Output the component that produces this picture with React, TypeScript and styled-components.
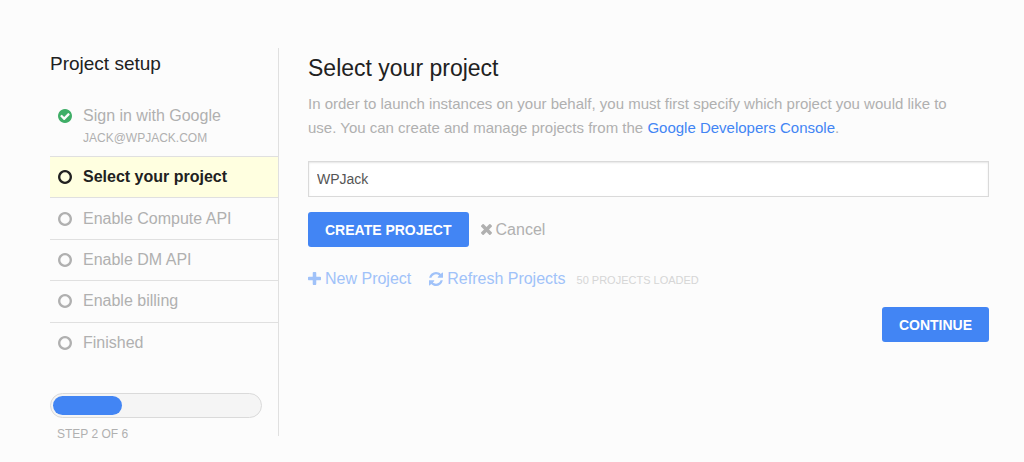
import React from "react";
import styled, { createGlobalStyle } from "styled-components";

const GlobalStyle = createGlobalStyle`
  * { box-sizing: border-box; }
  body {
    margin: 0;
    background: #fcfcfc;
    color: #b0b0b0;
    font-family: "Liberation Sans", Arial, sans-serif;
    font-size: 16px;
    line-height: 24px;
  }
`;

const Page = styled.div`
  display: flex;
  align-items: flex-start;
  padding: 48px 35px 24px 50px;
`;

const Sidebar = styled.aside`
  flex: 0 0 228px;
`;

const SidebarTitle = styled.h2`
  margin: 0 0 16px;
  color: #212121;
  font-size: 19px;
  font-weight: 400;
  line-height: 32px;
`;

const Steps = styled.ol`
  display: grid;
  grid-template-rows: 61px repeat(5, 1fr);
  min-height: 268px;
  margin: 0;
  padding: 0;
  list-style: none;
`;

const Step = styled.li<{ $active?: boolean }>`
  display: flex;
  align-items: center;
  gap: 11px;
  padding-left: 8px;
  border-bottom: 1px solid #e0e0e0;
  background: ${(p) => (p.$active ? "#ffffe0" : "transparent")};
  color: ${(p) => (p.$active ? "#212121" : "inherit")};
  font-weight: ${(p) => (p.$active ? 700 : 400)};

  &:last-child { border-bottom: 0; }
`;

const DoneStep = styled(Step)`
  align-items: flex-start;
  padding-top: 8px;
`;

const StepIcon = styled.span<{ $done?: boolean }>`
  display: flex;
  align-items: center;
  height: 24px;
  color: ${(p) => (p.$done ? "#3fae67" : "inherit")};
`;

const Account = styled.div`
  font-size: 12px;
  line-height: 20px;
  text-transform: uppercase;
`;

const Track = styled.div`
  height: 25px;
  margin: 29px 16px 6px 0;
  padding: 2px;
  border: 1px solid #dadada;
  border-radius: 13px;
  background: #f5f5f5;
`;

const Fill = styled.div`
  height: 100%;
  border-radius: 10px;
  background: #4285f4;
`;

const StepCount = styled.div`
  padding-left: 7px;
  font-size: 12px;
  line-height: 20px;
  text-transform: uppercase;
`;

const Main = styled.main`
  flex: 1;
  min-width: 0;
  min-height: 388px;
  padding-left: 29px;
  border-left: 1px solid #e0e0e0;
`;

const Title = styled.h1`
  margin: 0 0 4px;
  color: #212121;
  font-size: 23px;
  font-weight: 400;
  line-height: 40px;
`;

const Intro = styled.p`
  margin: 0 0 21px;
  padding-right: 20px;
  font-size: 15px;
`;

const ConsoleLink = styled.a`
  color: #4285f4;
  text-decoration: none;
`;

const NameInput = styled.input`
  display: block;
  width: 100%;
  height: 36px;
  padding: 0 8px;
  border: 1px solid #dadada;
  border-radius: 0;
  background: #fff;
  box-shadow: inset 0 1px 2px rgba(0, 0, 0, 0.1);
  color: #555;
  font: 14px "Liberation Sans", Arial, sans-serif;
  outline: 0;
`;

const Actions = styled.div`
  display: flex;
  align-items: center;
  gap: 12px;
  margin-top: 15px;
`;

const Links = styled(Actions)`
  gap: 18px;
  margin-top: 18px;
`;

const Footer = styled.div`
  display: flex;
  justify-content: flex-end;
  margin-top: 15px;
`;

const PrimaryButton = styled.button`
  height: 35px;
  padding: 0 17px;
  border: 0;
  border-radius: 3px;
  background: #4285f4;
  color: #fff;
  font: 700 14px "Liberation Sans", Arial, sans-serif;
  text-transform: uppercase;
  cursor: pointer;
`;

const TextButton = styled.button<{ $link?: boolean }>`
  display: flex;
  align-items: center;
  gap: 4px;
  padding: 0;
  border: 0;
  background: none;
  color: ${(p) => (p.$link ? "#a0c2f9" : "inherit")};
  font: inherit;
  cursor: pointer;
`;

const Loaded = styled.span`
  margin-left: -7px;
  padding-top: 3px;
  color: #d6d6d6;
  font-size: 11px;
  text-transform: uppercase;
`;

type IconProps = { box: string; size: number; d: string };

const Icon = ({ box, size, d }: IconProps) => (
  <svg width={size} height={size} viewBox={box} fill="currentColor" aria-hidden="true">
    <path d={d} />
  </svg>
);

const ring =
  "M896 386a510 510 0 1 0 0 1020a510 510 0 1 0 0-1020zm768 510q0 209-103 385.5t-279.5 279.5-385.5 103-385.5-103-279.5-279.5-103-385.5 103-385.5 279.5-279.5 385.5-103 385.5 103 279.5 279.5 103 385.5z";
const check =
  "M1412 734q0-28-18-46l-91-90q-19-19-45-19t-45 19l-408 407-226-226q-19-19-45-19t-45 19l-91 90q-18 18-18 46 0 27 18 45l362 362q19 19 45 19 27 0 46-19l543-543q18-18 18-45zm252 162q0 209-103 385.5t-279.5 279.5-385.5 103-385.5-103-279.5-279.5-103-385.5 103-385.5 279.5-279.5 385.5-103 385.5 103 279.5 279.5 103 385.5z";
const cross =
  "M1490 1322q0 40-28 68l-136 136q-28 28-68 28t-68-28l-294-294-294 294q-28 28-68 28t-68-28l-136-136q-28-28-28-68t28-68l294-294-294-294q-28-28-28-68t28-68l136-136q28-28 68-28t68 28l294 294 294-294q28-28 68-28t68 28l136 136q28 28 28 68t-28 68l-294 294 294 294q28 28 28 68z";
const plus =
  "M1600 736v192q0 40-28 68t-68 28h-416v416q0 40-28 68t-68 28h-192q-40 0-68-28t-28-68v-416h-416q-40 0-68-28t-28-68v-192q0-40 28-68t68-28h416v-416q0-40 28-68t68-28h192q40 0 68 28t28 68v416h416q40 0 68 28t28 68z";
const refresh =
  "M1639 1056q0 5-1 7-64 268-268 434.5t-478 166.5q-146 0-282.5-55t-243.5-157l-129 129q-19 19-45 19t-45-19-19-45v-448q0-26 19-45t45-19h448q26 0 45 19t19 45-19 45l-137 137q71 66 161 102t187 36q134 0 250-65t186-179q11-17 53-117 8-23 30-23h192q13 0 22.5 9.5t9.5 22.5zm25-800v448q0 26-19 45t-45 19h-448q-26 0-45-19t-19-45 19-45l138-138q-148-137-349-137-134 0-250 65t-186 179q-11 17-53 117-8 23-30 23h-199q-13 0-22.5-9.5t-9.5-22.5v-7q65-268 270-434.5t480-166.5q146 0 284 55.5t245 156.5l130-129q19-19 45-19t45 19 19 45z";

const roundBox = "128 128 1536 1536";

const steps = ["Select your project", "Enable Compute API", "Enable DM API", "Enable billing", "Finished"];

export default function App() {
  return (
    <>
      <GlobalStyle />
      <Page>
        <Sidebar>
          <SidebarTitle>Project setup</SidebarTitle>
          <Steps>
            <DoneStep>
              <StepIcon $done>
                <Icon box={roundBox} size={14} d={check} />
              </StepIcon>
              <div>
                Sign in with Google
                <Account>jack@wpjack.com</Account>
              </div>
            </DoneStep>
            {steps.map((label, i) => (
              <Step key={label} $active={i === 0} aria-current={i === 0 ? "step" : undefined}>
                <StepIcon>
                  <Icon box={roundBox} size={14} d={ring} />
                </StepIcon>
                {label}
              </Step>
            ))}
          </Steps>
          <Track role="progressbar" aria-label="Setup progress" aria-valuemin={0} aria-valuemax={6} aria-valuenow={2}>
            <Fill style={{ width: `${(2 / 6) * 100}%` }} />
          </Track>
          <StepCount>Step 2 of 6</StepCount>
        </Sidebar>
        <Main>
          <Title>Select your project</Title>
          <Intro>
            In order to launch instances on your behalf, you must first specify which project you would like to use. You
            can create and manage projects from the <ConsoleLink href="#console">Google Developers Console</ConsoleLink>.
          </Intro>
          <NameInput aria-label="Project name" defaultValue="WPJack" />
          <Actions>
            <PrimaryButton type="button">Create project</PrimaryButton>
            <TextButton type="button">
              <Icon box="302 366 1188 1188" size={11} d={cross} />
              Cancel
            </TextButton>
          </Actions>
          <Links>
            <TextButton type="button" $link>
              <Icon box="192 128 1408 1408" size={13} d={plus} />
              New Project
            </TextButton>
            <TextButton type="button" $link>
              <Icon box={roundBox} size={14} d={refresh} />
              Refresh Projects
            </TextButton>
            <Loaded>50 projects loaded</Loaded>
          </Links>
          <Footer>
            <PrimaryButton type="button">Continue</PrimaryButton>
          </Footer>
        </Main>
      </Page>
    </>
  );
}
